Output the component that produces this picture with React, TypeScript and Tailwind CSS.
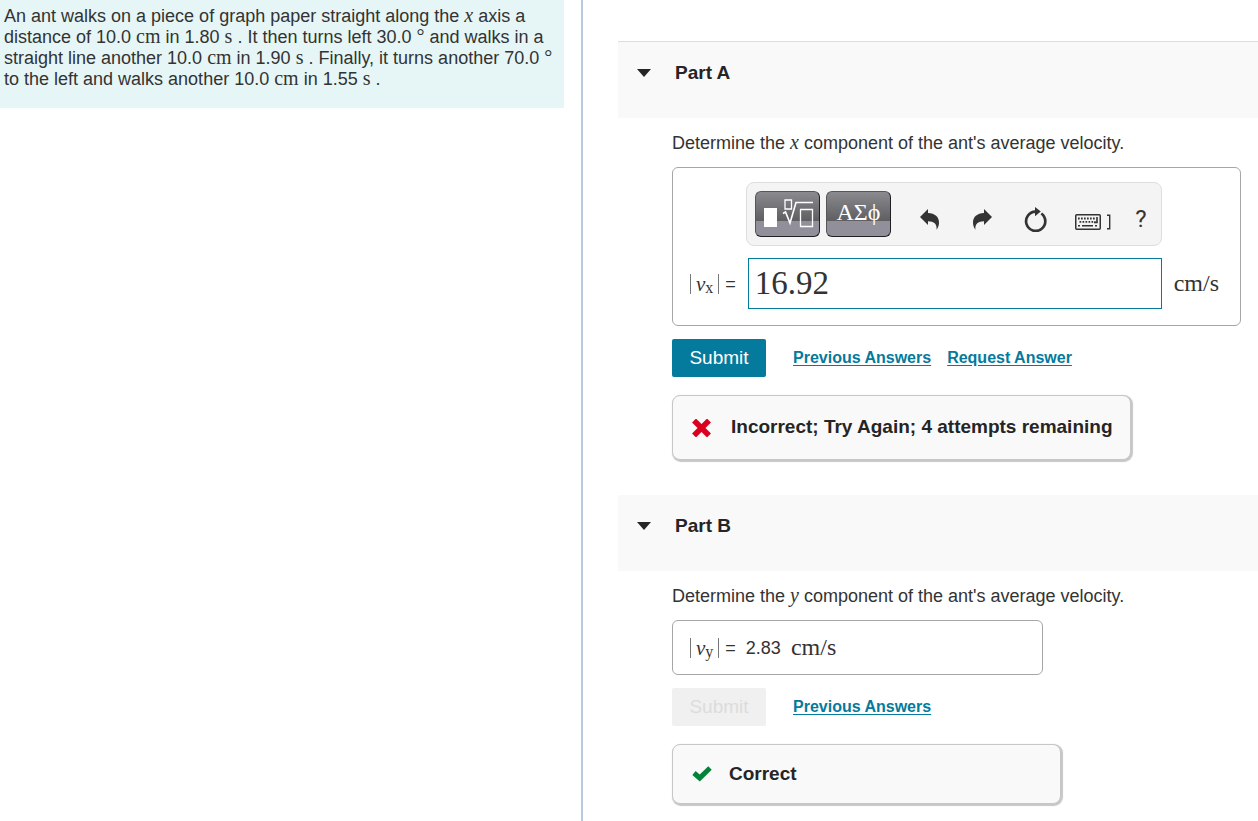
import React, { useState } from 'react';
import { clsx } from 'clsx';

const serif = "font-['Liberation_Serif',serif]";

function Unit({ children }: { children: React.ReactNode }) {
  return <span className={clsx(serif, 'text-[20px] leading-[0]')}>{children}</span>;
}

function LargeUnit({ children }: { children: React.ReactNode }) {
  return <span className={clsx(serif, 'pb-0.5 text-2xl leading-6')}>{children}</span>;
}

function Variable({ children }: { children: React.ReactNode }) {
  return <i className={clsx(serif, 'text-[20px] leading-[0]')}>{children}</i>;
}

function Magnitude({ axis }: { axis: string }) {
  return (
    <span className={clsx(serif, 'inline-flex items-center text-[21px] leading-6')}>
      <span className="h-5 w-px bg-[#777777]" />
      <span className="px-[5px]">
        <i>v</i>
        <sub className="-bottom-0.5 text-[16px] leading-none">{axis}</sub>
      </span>
      <span className="h-5 w-px bg-[#777777]" />
    </span>
  );
}

function PartHeader({ title, bordered }: { title: string; bordered?: boolean }) {
  return (
    <header className={clsx('bg-[#f9f9f9] pt-[17px] pb-[31px]', bordered && 'border-t border-[#dddddd]')}>
      <button
        type="button"
        className="flex items-center gap-6 pl-[19px] text-[19px] leading-7 font-bold text-[#252525]"
      >
        <svg className="h-[8px] w-[14px]" viewBox="0 0 14 8" fill="currentColor" aria-hidden="true">
          <path d="M0 0h14L7 8z" />
        </svg>
        <h2>{title}</h2>
      </button>
    </header>
  );
}

function TextLink({ children }: { children: React.ReactNode }) {
  return (
    <a href="#" className="text-base font-bold text-[#047a9c] underline underline-offset-2">
      {children}
    </a>
  );
}

function SubmitRow({ disabled, children }: { disabled?: boolean; children: React.ReactNode }) {
  return (
    <div className="flex items-center">
      <button
        type="button"
        disabled={disabled}
        className={clsx(
          'mr-[27px] h-[38px] w-[94px] rounded-[2px] text-[19px]',
          disabled ? 'bg-[#f0f0f0] text-[#dcdcdc]' : 'bg-[#047a9c] text-white',
        )}
      >
        Submit
      </button>
      <div className="flex gap-4">{children}</div>
    </div>
  );
}

function UndoIcon({ flipped }: { flipped?: boolean }) {
  return (
    <svg
      className={clsx('h-[21px] w-[19px]', flipped && '-scale-x-100')}
      viewBox="0 0 19 21"
      fill="currentColor"
      aria-hidden="true"
    >
      <path d="M8 0v4c7 .2 11 4 11 9.3 0 3-.8 5.400-2.400 7.500C17.200 14.500 14 12.500 8 12.200V16L0 8z" />
    </svg>
  );
}

function ResetIcon() {
  return (
    <svg className="h-[25px] w-[23px]" viewBox="0 0 23 25" fill="none" aria-hidden="true">
      <path d="M17.300 6.500A9.600 9.600 0 1 1 11.500 4.700" stroke="currentColor" strokeWidth="2.700" />
      <path d="M11 0l5.800 4.600-5.800 4.600z" fill="currentColor" />
    </svg>
  );
}

function KeyboardIcon() {
  return (
    <svg className="h-4 w-[36px]" viewBox="0 0 36 16" fill="none" aria-hidden="true">
      <rect x=".75" y=".75" width="24.500" height="14.500" rx="1" stroke="currentColor" strokeWidth="1.500" />
      <path d="M3 4.500h18M4.500 7.800h16" stroke="currentColor" strokeWidth="1.800" strokeDasharray="1.700 1.300" />
      <path d="M22 3v5.500h-3M3 11.700h2M7 11.700h11M20 11.700h2" stroke="currentColor" strokeWidth="1.600" />
      <path d="M32 1.200h2.700v13.500H32" stroke="currentColor" strokeWidth="1.400" />
    </svg>
  );
}

function TemplateIcon() {
  return (
    <svg className="h-[30px] w-[50px]" viewBox="0 0 50 30" fill="none" stroke="white" aria-hidden="true">
      <path d="M0 9h13v19H0z" fill="white" stroke="none" />
      <path d="M21 1h6.500v9H21z" strokeWidth="1.300" />
      <path d="M19 14.500l2.500-1.500 4.500 11L32 3.500h17" strokeWidth="1.600" />
      <path d="M36.500 10.500h12v17h-12z" strokeWidth="1.300" />
    </svg>
  );
}

const templateButton =
  'flex h-[46px] w-[65px] items-center justify-center rounded-md border border-[#55555a] border-r-[#202024] border-b-[#202024] bg-linear-to-b from-[#8b8b8f] from-0% via-[#5f5f62] via-66% to-[#908f9a] to-66% text-white';

function EquationToolbar() {
  return (
    <div className="-ml-0.5 flex h-16 items-center rounded-lg border border-[#dddddd] bg-[#f4f4f4] pl-2 text-[#333333]">
      <div className="flex gap-1.5">
        <button type="button" aria-label="Templates" className={clsx(templateButton, 'pl-1')}>
          <TemplateIcon />
        </button>
        <button type="button" aria-label="Symbols" className={clsx(templateButton, serif, 'pb-1 text-2xl')}>
          ΑΣϕ
        </button>
      </div>
      <div className="flex items-center pt-2.5 pl-3">
        <button type="button" aria-label="Undo" className="flex w-[53px] justify-center">
          <UndoIcon />
        </button>
        <button type="button" aria-label="Redo" className="flex w-[53px] justify-center">
          <UndoIcon flipped />
        </button>
        <button type="button" aria-label="Reset" className="flex w-[53px] justify-center">
          <ResetIcon />
        </button>
        <button type="button" aria-label="Keyboard shortcuts" className="flex w-[63px] justify-center pt-1.5">
          <KeyboardIcon />
        </button>
        <button type="button" aria-label="Help" className="w-8 font-['Roboto',sans-serif] text-2xl leading-6">
          ?
        </button>
      </div>
    </div>
  );
}

function PartA() {
  const [answer, setAnswer] = useState('16.92');

  return (
    <section>
      <PartHeader title="Part A" bordered />
      <div className="pt-[11px] pr-[17px] pb-[35px] pl-[54px]">
        <p className="text-lg">
          Determine the <Variable>x</Variable> component of the ant's average velocity.
        </p>
        <div className="mt-2.5 grid grid-cols-[auto_1fr_auto] items-center gap-x-3 gap-y-3 rounded-md border border-[#a6a6a6] pt-3.5 pr-[21px] pb-4 pl-[17px]">
          <div className="col-start-2">
            <EquationToolbar />
          </div>
          <label htmlFor="velocity-x" className="col-start-1 flex items-center gap-1.5 text-lg">
            <Magnitude axis="x" /> =
          </label>
          <input
            id="velocity-x"
            value={answer}
            onChange={(e) => setAnswer(e.target.value)}
            className={clsx(serif, 'h-[51px] w-full min-w-0 border border-[#047a9c] px-1.5 text-[33px] outline-none')}
          />
          <LargeUnit>cm/s</LargeUnit>
        </div>
        <div className="mt-[13px]">
          <SubmitRow>
            <TextLink>Previous Answers</TextLink>
            <TextLink>Request Answer</TextLink>
          </SubmitRow>
        </div>
        <div className="mt-[18px] flex h-[65px] w-fit items-center gap-5 rounded-lg border border-[#c7c7c7] bg-[#f9f9f9] pr-[17px] pl-[19px] text-[19px] font-bold text-[#252525] shadow-[1px_1px_1px_1px_#c7c7c7]">
          <svg className="h-[18px] w-[19px]" viewBox="0 0 19 18" aria-hidden="true">
            <path
              d="M4 3.500l11 11M15 3.500l-11 11"
              stroke="#db0020"
              strokeWidth="5.600"
              strokeLinecap="square"
            />
          </svg>
          Incorrect; Try Again; 4 attempts remaining
        </div>
      </div>
    </section>
  );
}

function PartB() {
  return (
    <section>
      <PartHeader title="Part B" />
      <div className="pt-[11px] pr-[17px] pb-4 pl-[54px]">
        <p className="text-lg">
          Determine the <Variable>y</Variable> component of the ant's average velocity.
        </p>
        <div className="mt-2.5 flex h-[55px] w-[371px] items-center rounded-md border border-[#a6a6a6] pl-[17px] text-lg">
          <Magnitude axis="y" />
          <span className="ml-1.5">=</span>
          <span className="mx-2.5">2.83</span>
          <LargeUnit>cm/s</LargeUnit>
        </div>
        <div className="mt-[13px]">
          <SubmitRow disabled>
            <TextLink>Previous Answers</TextLink>
          </SubmitRow>
        </div>
        <div className="mt-[18px] flex h-[60px] w-[389px] items-center gap-[17px] rounded-lg border border-[#c7c7c7] bg-[#f9f9f9] px-[19px] text-[19px] font-bold text-[#252525] shadow-[1px_1px_1px_1px_#c7c7c7]">
          <svg className="h-[16px] w-[20px]" viewBox="0 0 20 16" aria-hidden="true">
            <path d="M2 7l5.700 5L18 2" fill="none" stroke="#038238" strokeWidth="5" />
          </svg>
          Correct
        </div>
      </div>
    </section>
  );
}

export default function App() {
  return (
    <div className="grid min-h-screen grid-cols-[minmax(0,583fr)_minmax(0,675fr)] bg-white font-['Liberation_Sans',Arial,sans-serif] text-[#333333]">
      <aside className="border-r-2 border-[#b8cadb] pr-[17px]">
        <p className="bg-[#e6f6f7] px-1 pt-[6px] pb-[18px] text-lg leading-[21px]">
          An ant walks on a piece of graph paper straight along the <Variable>x</Variable> axis a distance of 10.0{' '}
          <Unit>cm</Unit> in 1.80 <Unit>s</Unit> . It then turns left 30.0 <Unit>°</Unit> and walks in a straight line
          another 10.0 <Unit>cm</Unit> in 1.90 <Unit>s</Unit> . Finally, it turns another 70.0 <Unit>°</Unit> to the
          left and walks another 10.0 <Unit>cm</Unit> in 1.55 <Unit>s</Unit> .
        </p>
      </aside>
      <main className="pt-[41px] pl-[35px]">
        <PartA />
        <PartB />
      </main>
    </div>
  );
}
